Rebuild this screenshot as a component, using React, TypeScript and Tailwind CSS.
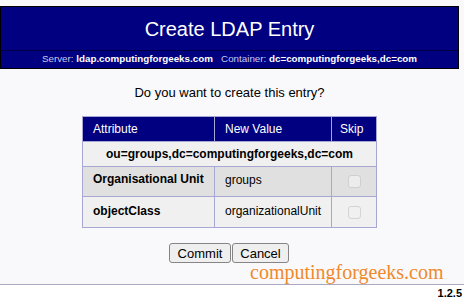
import React from "react";

export default function App() {
  return (
    <div className="relative w-[469px] h-[307px] bg-white font-['Liberation_Sans',Arial,sans-serif] text-black overflow-hidden">
      <div className="w-[464px] h-[284px] bg-[#f9f9fc] pt-[6px]">
        <div className="w-[459px] border border-black bg-[#000080]">
          <div className="h-[43px] flex items-center justify-center text-white text-[20px]">
            Create LDAP Entry
          </div>
          <div className="h-[18px] border-t border-[#000040] flex items-center justify-center text-[9.8px] text-[#c8c8f0]">
            <span>Server:&nbsp;</span>
            <span className="font-bold text-white">ldap.computingforgeeks.com</span>
            <span>&nbsp;&nbsp;&nbsp;Container:&nbsp;</span>
            <span className="font-bold text-white">dc=computingforgeeks,dc=com</span>
          </div>
        </div>
        <div className="w-[459px] mt-[16px] text-center text-[13px] leading-[15px]">
          Do you want to create this entry?
        </div>
        <div className="w-[459px] mt-[16px] flex justify-center">
          <table className="border-collapse text-[12px] w-[294px] table-fixed">
            <colgroup>
              <col className="w-[132px]" />
              <col className="w-[117px]" />
              <col className="w-[45px]" />
            </colgroup>
            <thead>
              <tr className="h-[25px] bg-[#000080] text-white">
                <th className="border border-[#a8a6d2] text-left font-normal pl-[10px]">Attribute</th>
                <th className="border border-[#a8a6d2] text-left font-normal pl-[10px]">New Value</th>
                <th className="border border-[#a8a6d2] text-left font-normal pl-[8px]">Skip</th>
              </tr>
            </thead>
            <tbody>
              <tr className="h-[25px] bg-[#f0f0f0]">
                <td colSpan={3} className="border border-[#a8a6d2] text-center font-bold">
                  ou=groups,dc=computingforgeeks,dc=com
                </td>
              </tr>
              <tr className="h-[30px] bg-[#e0e0e0]">
                <td className="border border-[#a8a6d2] font-bold pl-[10px] pb-[5px]">Organisational Unit</td>
                <td className="border border-[#a8a6d2] pl-[10px] pb-[4px]">groups</td>
                <td className="border border-[#a8a6d2]">
                  <div className="mx-auto w-[13px] h-[13px] rounded-[3px] border border-[#cfcfcf] bg-[#ececec]" />
                </td>
              </tr>
              <tr className="h-[31px] bg-[#f0f0f0]">
                <td className="border border-[#a8a6d2] font-bold pl-[10px] pb-[3px]">objectClass</td>
                <td className="border border-[#a8a6d2] pl-[10px] pb-[3px]">organizationalUnit</td>
                <td className="border border-[#a8a6d2]">
                  <div className="mx-auto w-[13px] h-[13px] rounded-[3px] border border-[#d4d4d4] bg-[#f0f0f0]" />
                </td>
              </tr>
            </tbody>
          </table>
        </div>
        <div className="w-[459px] mt-[15px] flex justify-center gap-[1px] pr-[1px]">
          <button className="h-[20px] w-[62px] text-[13px] bg-[#efefef] border border-[#858585] rounded-[3px] leading-none">
            Commit
          </button>
          <button className="h-[20px] w-[57px] text-[13px] bg-[#efefef] border border-[#858585] rounded-[3px] leading-none">
            Cancel
          </button>
        </div>
      </div>
      <div className="w-[464px] h-px bg-[#aaa8c2]" />
      <div className="w-[462px] text-right text-[11px] font-bold leading-[13px] mt-[2px]">1.2.5</div>
      <div className="absolute left-[250px] top-[260px] text-[20px] leading-[24px] text-[#f0892a] font-['Liberation_Serif',serif]">
        computingforgeeks.com
      </div>
    </div>
  );
}
